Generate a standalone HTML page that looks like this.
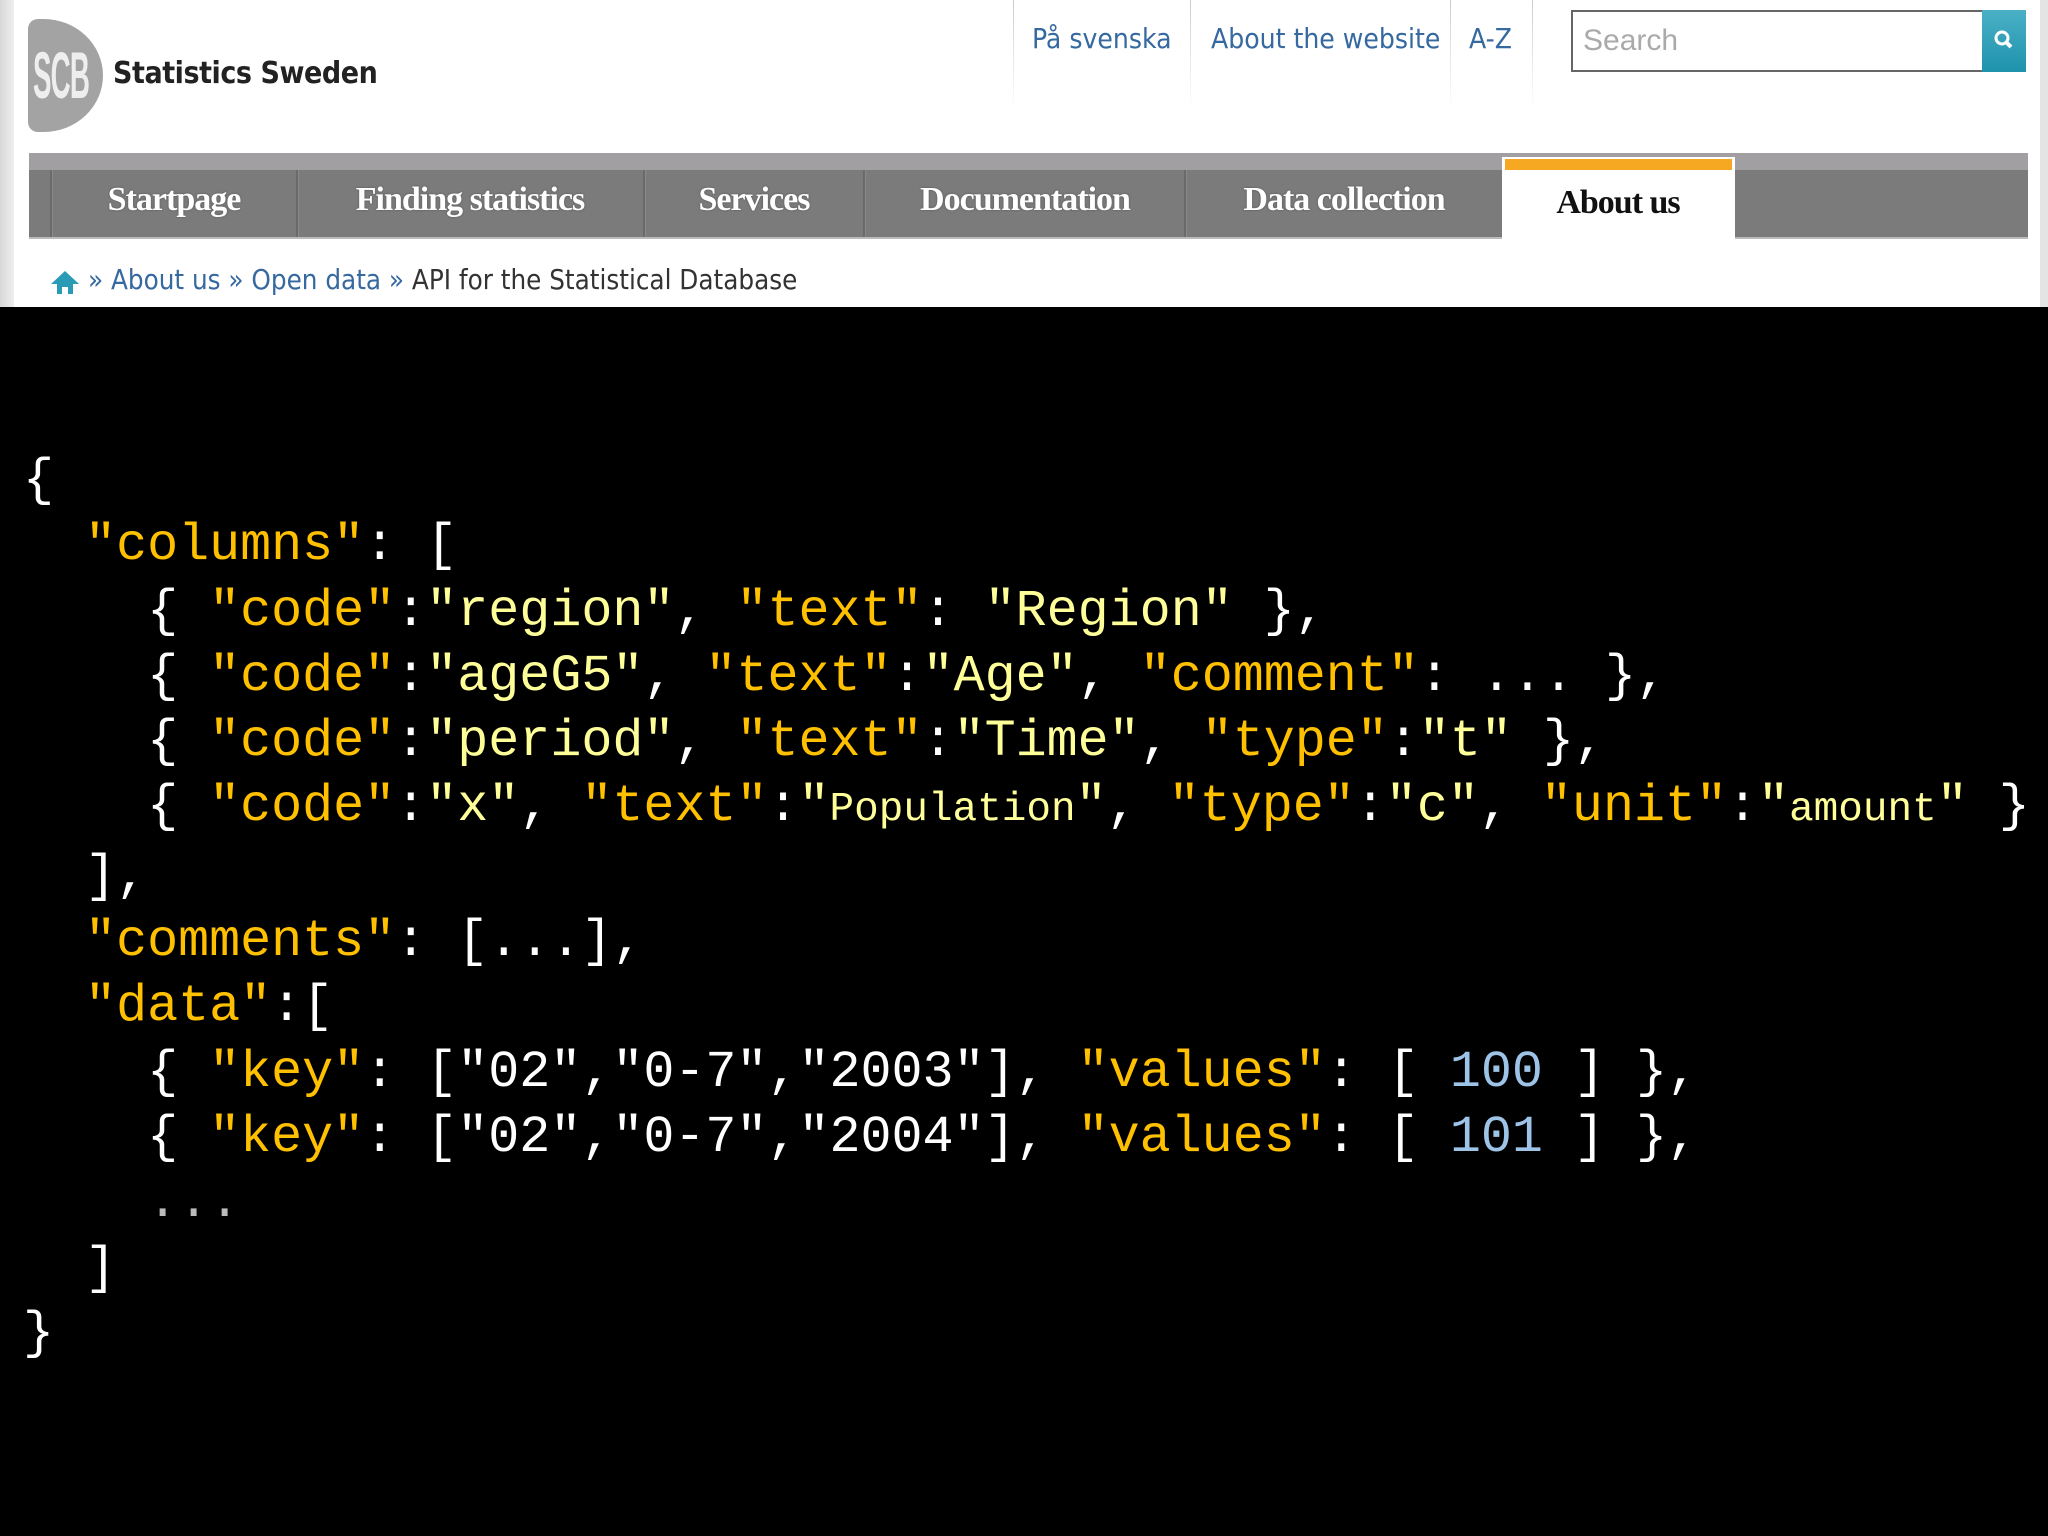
<!DOCTYPE html>
<html><head><meta charset="utf-8">
<style>
*{margin:0;padding:0;box-sizing:border-box}
html,body{width:2048px;height:1536px;background:#000;overflow:hidden}
#hdr{position:absolute;left:0;top:0;width:2048px;height:307px;background:#fff}
#lstrip{position:absolute;left:0;top:0;width:14px;height:307px;background:linear-gradient(to right,#d8d8d8,#eee)}
#rstrip{position:absolute;right:0;top:0;width:8px;height:307px;background:#e4e4e4}
#logo{position:absolute;left:28px;top:19px;width:75px;height:113px;background:#a3a3a3;border-radius:10px 60px 60px 10px / 10px 57px 57px 10px;color:#eee;font:bold 66px "Liberation Sans Narrow","Liberation Sans",sans-serif;line-height:113px;padding-left:5px;overflow:hidden}
#logo span{display:inline-block;transform:scaleX(.42);transform-origin:left;letter-spacing:-2px}
#brand{position:absolute;left:113px;top:56px;font:bold 30px "DejaVu Sans",sans-serif;color:#222;letter-spacing:-0.5px;transform:scaleX(.9);transform-origin:left}
.tl{position:absolute;top:22px;font:28px "DejaVu Sans Condensed","Liberation Sans",sans-serif;color:#36699f}
.vs{position:absolute;top:0;width:1px;height:110px;background:linear-gradient(#ccc,#fff)}
#search{position:absolute;left:1571px;top:10px;width:413px;height:62px;border:2px solid #666;border-right:none;background:#fff;font:30px "Liberation Sans Narrow","Liberation Sans",sans-serif;color:#aaa;padding:12px 0 0 10px}
#sbtn{position:absolute;left:1982px;top:10px;width:44px;height:62px;background:linear-gradient(#4ab0c6,#1e93ad)}
#nav{position:absolute;left:29px;top:153px;width:1999px;height:86px;background:#7c7b7c;border-top:17px solid #a19fa1;border-bottom:2px solid #bbb}
.sep{position:absolute;top:170px;width:3px;height:67px;background:#6b6a6b;border-right:1px solid #8a898a}
.tab{position:absolute;top:181px;font:bold 34px "Liberation Serif",serif;color:#fff;letter-spacing:-1px;text-shadow:0 0 2px #555;transform:translateX(-50%);white-space:nowrap}
#act{position:absolute;left:1502px;top:157px;width:233px;height:83px;background:#fff}
#org{position:absolute;left:1505px;top:159px;width:227px;height:11px;background:#f7a823}
#bc{position:absolute;left:88px;top:264px;font:27.5px "DejaVu Sans Condensed","Liberation Sans",sans-serif;color:#36699f;white-space:nowrap}
#bc b{font-weight:normal;color:#333}
pre{position:absolute;left:23px;top:448px;font:51.7px/65.3px "Liberation Mono","DejaVu Sans Mono",monospace;color:#fff}
.k{color:#ffc000}.v{color:#ffff99}.n{color:#9dc3e6}.g{color:#bbb}
.s{font-size:41px}
</style></head><body>
<div id="hdr">
<div id="lstrip"></div><div id="rstrip"></div>
<div id="logo"><span>SCB</span></div>
<div id="brand">Statistics Sweden</div>
<div class="vs" style="left:1013px"></div>
<div class="vs" style="left:1190px"></div>
<div class="vs" style="left:1450px"></div>
<div class="vs" style="left:1532px"></div>
<div class="tl" style="left:1032px">På svenska</div>
<div class="tl" style="left:1211px">About the website</div>
<div class="tl" style="left:1469px">A-Z</div>
<div id="search">Search</div>
<div id="sbtn"><svg width="44" height="62" viewBox="0 0 44 62"><circle cx="20" cy="28" r="6" fill="none" stroke="#fff" stroke-width="3"/><line x1="24" y1="32" x2="29" y2="37" stroke="#fff" stroke-width="4"/></svg></div>
<div id="nav"></div>
<div class="sep" style="left:50px"></div>
<div class="sep" style="left:296px"></div>
<div class="sep" style="left:643px"></div>
<div class="sep" style="left:863px"></div>
<div class="sep" style="left:1184px"></div>
<div class="tab" style="left:174px">Startpage</div>
<div class="tab" style="left:470px">Finding statistics</div>
<div class="tab" style="left:754px">Services</div>
<div class="tab" style="left:1025px">Documentation</div>
<div class="tab" style="left:1344px">Data collection</div>
<div id="act"></div><div id="org"></div>
<div class="tab" style="left:1618px;top:184px;color:#111;text-shadow:none">About us</div>
<svg style="position:absolute;left:50px;top:270px" width="30" height="25" viewBox="0 0 30 25"><path d="M15 1 L29 14 L23 14 L23 24 L18 24 L18 17 L12 17 L12 24 L7 24 L7 14 L1 14 Z" fill="#2a9bb5"/></svg>
<div id="bc">» About us » Open data » <b>API for the Statistical Database</b></div>
</div>
<pre>{
  <span class="k">"columns"</span>: [
    { <span class="k">"code"</span>:<span class="v">"region"</span>, <span class="k">"text"</span>: <span class="v">"Region"</span> },
    { <span class="k">"code"</span>:<span class="v">"ageG5"</span>, <span class="k">"text"</span>:<span class="v">"Age"</span>, <span class="k">"comment"</span>: ... },
    { <span class="k">"code"</span>:<span class="v">"period"</span>, <span class="k">"text"</span>:<span class="v">"Time"</span>, <span class="k">"type"</span>:<span class="v">"t"</span> },
    { <span class="k">"code"</span>:<span class="v">"x"</span>, <span class="k">"text"</span>:<span class="v">"<span class="s">Population</span>"</span>, <span class="k">"type"</span>:<span class="v">"c"</span>, <span class="k">"unit"</span>:<span class="v">"<span class="s">amount</span>"</span> }
  ],
  <span class="k">"comments"</span>: [...],
  <span class="k">"data"</span>:[
    { <span class="k">"key"</span>: ["02","0-7","2003"], <span class="k">"values"</span>: [ <span class="n">100</span> ] },
    { <span class="k">"key"</span>: ["02","0-7","2004"], <span class="k">"values"</span>: [ <span class="n">101</span> ] },
    <span class="g">...</span>
  ]
}</pre>
</body></html>
